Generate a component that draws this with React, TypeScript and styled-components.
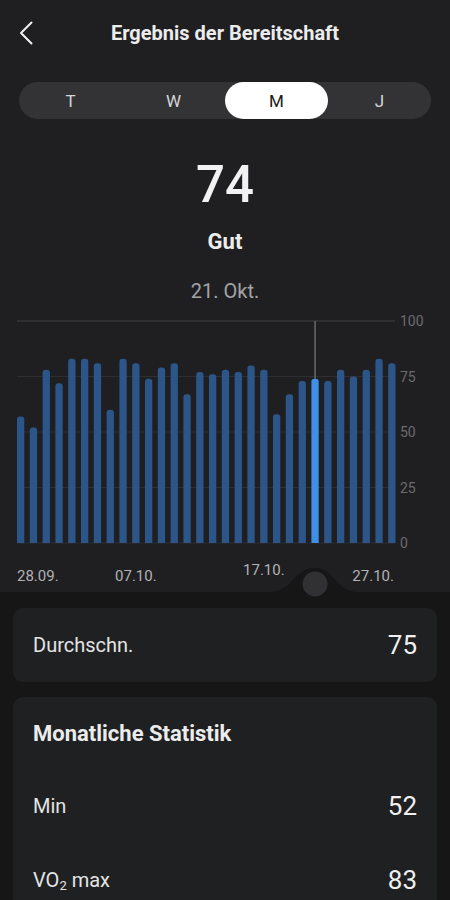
import React, { useState } from "react";
import styled, { createGlobalStyle } from "styled-components";

const GlobalStyle = createGlobalStyle`
  body {
    margin: 0;
    background-color: #161617;
    font-family: Roboto, "Noto Sans", "Liberation Sans", sans-serif;
    color: #e8e8e8;
  }
`;

const Page = styled.div`
  width: 450px;
  min-height: 900px;
  background-color: #161617;
`;

const TopSection = styled.section`
  background-color: #1f1f21;
  position: relative;
  z-index: 1;
`;

const Header = styled.header`
  display: grid;
  grid-template-columns: 56px 1fr 56px;
  align-items: center;
  height: 66px;
`;

const BackButton = styled.button`
  display: flex;
  align-items: center;
  justify-content: flex-start;
  padding: 0 0 0 19px;
  background: none;
  border: none;
  color: #f0f0f0;
  height: 100%;
  cursor: pointer;
`;

const Title = styled.h1`
  margin: 0;
  text-align: center;
  font-size: 20px;
  font-weight: 700;
  color: #ececec;
`;

const Tabs = styled.div`
  display: flex;
  margin: 16px 19px 0;
  height: 37px;
  border-radius: 19px;
  background-color: #333336;
`;

const Tab = styled.button<{ $active?: boolean }>`
  flex: 1;
  border: none;
  border-radius: 19px;
  font-family: inherit;
  font-size: 17px;
  background-color: ${(p) => (p.$active ? "#ffffff" : "transparent")};
  color: ${(p) => (p.$active ? "#1a1a1a" : "#d6d6d6")};
  cursor: pointer;
`;

const Score = styled.div`
  display: flex;
  flex-direction: column;
  align-items: center;
  padding-top: 36px;
`;

const ScoreValue = styled.div`
  font-size: 51px;
  line-height: 60px;
  font-weight: 500;
  color: #f2f2f2;
`;

const ScoreLabel = styled.div`
  margin-top: 13px;
  font-size: 22px;
  line-height: 28px;
  font-weight: 700;
  color: #ededed;
`;

const ScoreDate = styled.div`
  margin-top: 23px;
  font-size: 20px;
  line-height: 24px;
  color: #a3a3a5;
`;

const ChartSvg = styled.svg`
  display: block;
  margin-top: 7px;
  overflow: visible;
`;

const Content = styled.div`
  display: flex;
  flex-direction: column;
  gap: 15px;
  padding: 16px 13px 0;
`;

const Card = styled.div`
  background-color: #1f2022;
  border-radius: 10px;
  padding: 0 20px;
`;

const CardTitle = styled.h2`
  margin: 0;
  height: 72px;
  display: flex;
  align-items: center;
  font-size: 22px;
  font-weight: 700;
  color: #ececec;
`;

const Row = styled.div`
  display: flex;
  align-items: center;
  justify-content: space-between;
  height: 74px;
`;

const RowLabel = styled.span`
  font-size: 20px;
  color: #e4e4e4;
`;

const RowValue = styled.span`
  font-size: 26px;
  color: #f0f0f0;
`;

const Sub = styled.span`
  font-size: 13px;
  vertical-align: -3px;
`;

const values = [
  57, 52, 78, 72, 83, 83, 81, 60, 83, 81, 74, 79, 81, 67, 77, 76, 78, 77, 80,
  78, 58, 67, 73, 74, 73, 78, 75, 78, 83, 81,
];

const SELECTED = 23;
const X0 = 17;
const STEP = 12.8;
const BAR_W = 7.3;
const BASE = 233;
const SCALE = 2.22;

const barPath = (x: number, top: number, w: number, r: number) =>
  `M${x} ${BASE} L${x} ${top + r} Q${x} ${top} ${x + r} ${top} L${x + w - r} ${top} Q${x + w} ${top} ${x + w} ${top + r} L${x + w} ${BASE} Z`;

const Chart = () => {
  const gridLines = [100, 75, 50, 25, 0];
  const selX = X0 + SELECTED * STEP + BAR_W / 2;
  const labels = [
    { text: "28.09.", x: 17, y: 271, anchor: "start" },
    { text: "07.10.", x: X0 + 9 * STEP + BAR_W / 2, y: 271, anchor: "middle" },
    { text: "17.10.", x: X0 + 19 * STEP + BAR_W / 2, y: 265, anchor: "middle" },
    { text: "27.10.", x: 394, y: 271, anchor: "end" },
  ];
  return (
    <ChartSvg width={450} height={282} viewBox="0 0 450 282">
      {gridLines.map((g) => {
        const y = BASE - g * SCALE;
        return (
          <g key={g}>
            <line
              x1={17}
              x2={395}
              y1={y}
              y2={y}
              stroke={g === 100 ? "#404042" : "#2f2f31"}
              strokeWidth={1}
            />
            <text
              x={400}
              y={y + 5}
              fontSize={14}
              fill="#6b6b6e"
              fontFamily="Roboto, sans-serif"
            >
              {g}
            </text>
          </g>
        );
      })}
      <line
        x1={selX}
        x2={selX}
        y1={BASE - 100 * SCALE}
        y2={BASE - values[SELECTED] * SCALE}
        stroke="#8c8c8e"
        strokeWidth={1}
      />
      {values.map((v, i) => (
        <path
          key={i}
          d={barPath(X0 + i * STEP, BASE - v * SCALE, BAR_W, 3)}
          fill={i === SELECTED ? "#3d8fe8" : "#2c5689"}
        />
      ))}
      {labels.map((l) => (
        <text
          key={l.text}
          x={l.x}
          y={l.y}
          fontSize={15}
          fill="#b2b2b4"
          textAnchor={l.anchor as "start" | "middle" | "end"}
          fontFamily="Roboto, sans-serif"
        >
          {l.text}
        </text>
      ))}
      <path
        d={`M270 282 C292 282 294 258 ${selX} 258 C334 258 336 282 358 282 Z`}
        fill="#161617"
      />
      <circle cx={selX} cy={274} r={12.5} fill="#313133" />
    </ChartSvg>
  );
};

const BackIcon = () => (
  <svg width="15" height="24" viewBox="0 0 15 24" fill="none">
    <path
      d="M12.5 1.5 L2 12 L12.5 22.5"
      stroke="currentColor"
      strokeWidth="2"
      strokeLinecap="round"
      strokeLinejoin="round"
    />
  </svg>
);

const App = () => {
  const [tab, setTab] = useState("M");
  return (
    <Page>
      <GlobalStyle />
      <TopSection>
        <Header>
          <BackButton aria-label="Zurück">
            <BackIcon />
          </BackButton>
          <Title>Ergebnis der Bereitschaft</Title>
          <span />
        </Header>
        <Tabs>
          {["T", "W", "M", "J"].map((t) => (
            <Tab key={t} $active={tab === t} onClick={() => setTab(t)}>
              {t}
            </Tab>
          ))}
        </Tabs>
        <Score>
          <ScoreValue>74</ScoreValue>
          <ScoreLabel>Gut</ScoreLabel>
          <ScoreDate>21. Okt.</ScoreDate>
        </Score>
        <Chart />
      </TopSection>
      <Content>
        <Card>
          <Row>
            <RowLabel>Durchschn.</RowLabel>
            <RowValue>75</RowValue>
          </Row>
        </Card>
        <Card>
          <CardTitle>Monatliche Statistik</CardTitle>
          <Row>
            <RowLabel>Min</RowLabel>
            <RowValue>52</RowValue>
          </Row>
          <Row>
            <RowLabel>
              VO<Sub>2</Sub> max
            </RowLabel>
            <RowValue>83</RowValue>
          </Row>
        </Card>
      </Content>
    </Page>
  );
};

export default App;
